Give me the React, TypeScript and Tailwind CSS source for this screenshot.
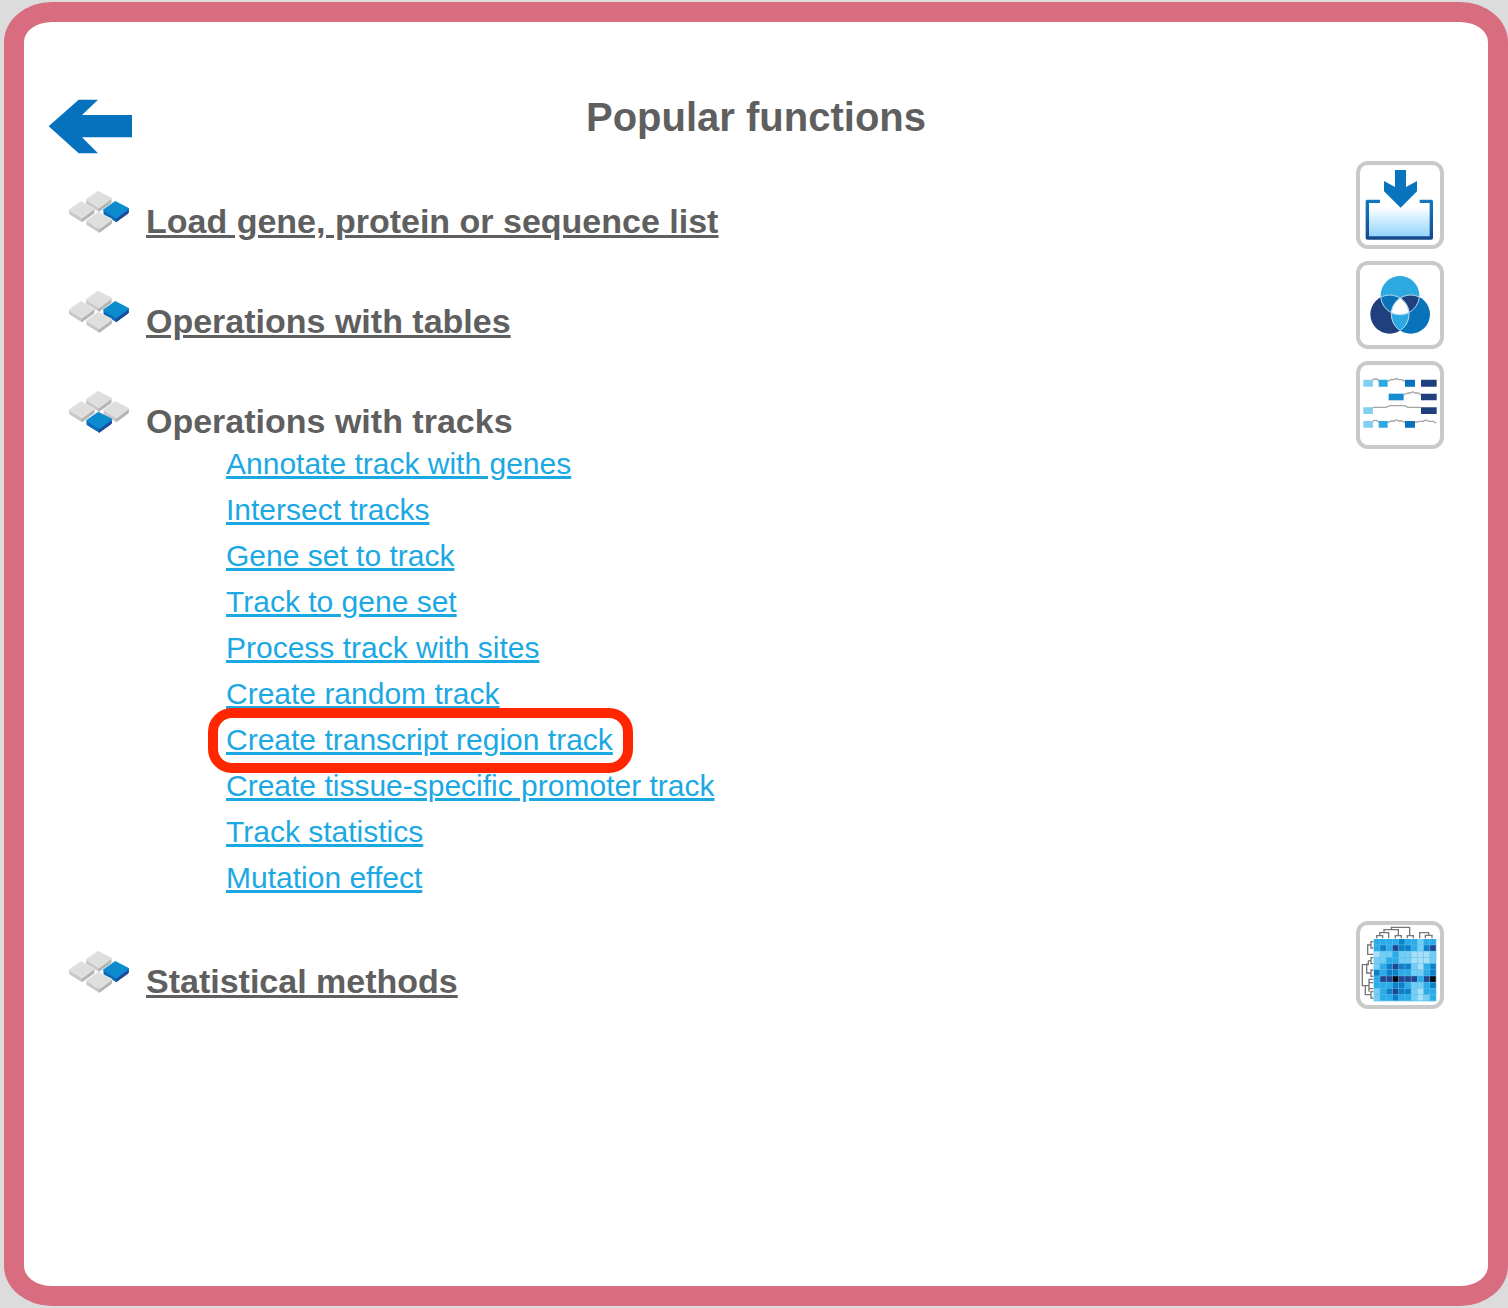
import type { ReactNode } from "react";

const links = [
  "Annotate track with genes",
  "Intersect tracks",
  "Gene set to track",
  "Track to gene set",
  "Process track with sites",
  "Create random track",
  "Create transcript region track",
  "Create tissue-specific promoter track",
  "Track statistics",
  "Mutation effect",
];

function Slab({ x, y, active }: { x: number; y: number; active?: boolean }) {
  return (
    <g transform={`translate(${x} ${y})`} strokeLinejoin="round">
      <path
        d="M2 27 39 50V62L2 39Z"
        fill={active ? "#0b6ab8" : "#c8c8c8"}
        stroke={active ? "#0b6ab8" : "#c8c8c8"}
        strokeWidth="3"
      />
      <path
        d="M39 50 75 24V36L39 62Z"
        fill={active ? "#1a4a9e" : "#b4b4b4"}
        stroke={active ? "#1a4a9e" : "#b4b4b4"}
        strokeWidth="3"
      />
      <path
        d="M36 3 75 23 39 50 2 27Z"
        fill={active ? "#0d8bcf" : "#dededd"}
        stroke={active ? "#0d8bcf" : "#e0e0e0"}
        strokeWidth="5"
      />
    </g>
  );
}

function SlabIcon({ open }: { open?: boolean }) {
  return (
    <svg viewBox="0 0 180 126" className="h-[42px] w-[60px]" aria-hidden="true">
      <Slab x={51} y={-1} />
      <Slab x={0} y={30} />
      <Slab x={103} y={30} active={!open} />
      <Slab x={52} y={62} active={open} />
    </svg>
  );
}

function LoadIcon() {
  return (
    <svg viewBox="30 30 240 240" className="size-20" aria-hidden="true">
      <defs>
        <linearGradient id="tray" x1="0" y1="0" x2="0" y2="1">
          <stop offset="0.15" stopColor="#ffffff" />
          <stop offset="1" stopColor="#8bd3ff" />
        </linearGradient>
        <linearGradient id="trayEdge" x1="0" y1="0" x2="0" y2="1">
          <stop offset="0" stopColor="#1277be" />
          <stop offset="1" stopColor="#174a8c" />
        </linearGradient>
      </defs>
      <path d="M52 139H244V249H52Z" fill="url(#tray)" />
      <path d="M90 139H52V249H244V139H209" fill="none" stroke="url(#trayEdge)" strokeWidth="10" strokeLinejoin="round" />
      <path d="M135 45H168V96L201 78V109L152 158 102 109V78L135 96Z" fill="#0874be" />
    </svg>
  );
}

function VennIcon() {
  return (
    <svg viewBox="30 30 240 240" className="size-20" aria-hidden="true">
      <defs>
        <clipPath id="vTop"><circle cx="150" cy="121" r="58" /></clipPath>
        <clipPath id="vLeft"><circle cx="119" cy="178" r="58" /></clipPath>
        <clipPath id="vRight"><circle cx="182" cy="178" r="58" /></clipPath>
      </defs>
      <circle cx="150" cy="121" r="58" fill="#2ca9e1" />
      <circle cx="119" cy="178" r="58" fill="#1f3f7d" />
      <circle cx="182" cy="178" r="58" fill="#0873bb" />
      <g clipPath="url(#vTop)">
        <circle cx="119" cy="178" r="58" fill="#0873bb" />
        <circle cx="182" cy="178" r="58" fill="#1f3f7d" />
      </g>
      <g clipPath="url(#vLeft)">
        <circle cx="182" cy="178" r="58" fill="#2ca9e1" />
        <g clipPath="url(#vRight)"><circle cx="150" cy="121" r="58" fill="#ffffff" /></g>
      </g>
      <g fill="none" stroke="#b9dcef" strokeWidth="3">
        <g clipPath="url(#vTop)">
          <circle cx="119" cy="178" r="58" />
          <circle cx="182" cy="178" r="58" />
        </g>
        <g clipPath="url(#vLeft)">
          <circle cx="182" cy="178" r="58" />
          <circle cx="150" cy="121" r="58" />
        </g>
        <g clipPath="url(#vRight)">
          <circle cx="119" cy="178" r="58" />
          <circle cx="150" cy="121" r="58" />
        </g>
      </g>
    </svg>
  );
}

function TracksIcon() {
  return (
    <svg viewBox="30 30 240 240" className="size-20" aria-hidden="true">
      <g fill="none" stroke="#a6a6a6" strokeWidth="4">
        <path d="M67 76 73 72H80L87 77M113 79 124 73 133 74 139 70 146 74H155L166 79" />
        <path d="M162 119 175 114H182L188 110 195 114H204L213 120" />
        <path d="M68 157H107L120 152H164L174 157H213" />
        <path d="M67 200 73 196H80L87 201M113 203 124 198H133L139 194 146 198H155L166 203M195 203 207 199H219L227 195 236 199H250L258 205" />
      </g>
      <path d="M40 74H69V95H40ZM40 157H69V177H40ZM40 198H69V218H40Z" fill="#82cff2" />
      <path d="M86 74H113V95H86ZM86 198H113V218H86Z" fill="#2ca9e1" />
      <path d="M116 116H161V136H116Z" fill="#168bcf" />
      <path d="M165 74H195V95H165ZM165 198H195V218H165Z" fill="#0873bb" />
      <path d="M213 74H260V95H213ZM213 116H260V136H213ZM213 157H260V177H213Z" fill="#1f3f7d" />
    </svg>
  );
}

const shades: Record<string, string> = {
  a: "#a9e0f8",
  b: "#74cdf3",
  c: "#2bace6",
  d: "#0f80c8",
  e: "#24458f",
  k: "#05060f",
};

const heat = [
  "ccccdccbcc",
  "cdceddcbde",
  "abbcbbaaab",
  "bbccbbaaab",
  "bcdeddbacd",
  "dcddccbbcd",
  "ceekeeecek",
  "cccddcbbcd",
  "bcdeddbacc",
  "bccdccbabc",
].map((row) => row.split(""));

function HeatmapIcon() {
  return (
    <svg viewBox="30 30 240 240" className="size-20" aria-hidden="true">
      <rect x="71" y="72" width="188" height="187" fill="#5cc0ee" />
      {heat.map((row, r) =>
        row.map((s, c) => (
          <rect
            key={`${r}-${c}`}
            x={72 + c * 18.7}
            y={72 + r * 18.6}
            width="17"
            height="17"
            fill={shades[s]}
          />
        )),
      )}
      <g fill="none" stroke="#777777" strokeWidth="4">
        <path d="M80 70V62H98V70M89 62V53H116V70M102 53V44H145V62M136 70V62H154V70M124 44V37H179V62M172 70V62H190V70" />
        <path d="M209 70V53H236V61M226 70V61H246V70" />
        <path d="M70 80H63V99H70M63 90H53V118H70M70 128H63V146H70M63 137H55M70 165H63V184H70M63 174H50V145M55 137V149H37V212H46M70 193H57V230M70 203H57M57 212H46V239H63M70 221H57M70 230H63V249H70" />
      </g>
    </svg>
  );
}

function Section({
  title,
  icon,
  open,
  children,
}: {
  title: string;
  icon: ReactNode;
  open?: boolean;
  children?: ReactNode;
}) {
  return (
    <section className="grid min-h-[100px] grid-cols-[60px_1fr_88px] items-start gap-x-[17px]">
      <div className="pt-[30px]">
        <SlabIcon open={open} />
      </div>
      <div>
        <h2 className="pt-10 text-[34px] leading-10 font-bold">
          {open ? title : <a href="#" className="underline">{title}</a>}
        </h2>
        {children}
      </div>
      <button
        type="button"
        aria-label={title}
        className="size-[88px] rounded-xl border-4 border-[#c9c9c9] bg-white"
      >
        {icon}
      </button>
    </section>
  );
}

export default function App() {
  return (
    <div className="flex min-h-screen bg-[#dcdcdc] py-0.5 pl-1 font-['Liberation_Sans',Arial,sans-serif] text-[#5f5f5f]">
      <main className="flex-1 rounded-[48px/40px] border-20 border-[#d86d80] bg-white pb-20">
        <header className="grid h-[139px] grid-cols-[1fr_auto_1fr] items-start px-6 pt-[71px]">
          <button type="button" aria-label="Back" className="mt-1.5 w-[84px]">
            <svg viewBox="144 297 252 165" className="h-[55px] w-[84px]" aria-hidden="true">
              <path d="M146 379 236 299H294L246 345H396V412H246L294 460H236Z" fill="#0672be" />
            </svg>
          </button>
          <h1 className="text-[40px] leading-12 font-bold">Popular functions</h1>
        </header>
        <div className="pr-11 pl-[45px]">
          <Section title="Load gene, protein or sequence list" icon={<LoadIcon />} />
          <Section title="Operations with tables" icon={<VennIcon />} />
          <Section title="Operations with tracks" icon={<TracksIcon />} open>
            <ul className="pb-5 pl-20">
              {links.map((label) => (
                <li key={label} className="text-[30px] leading-[46px] text-[#1ba8e3]">
                  <a href="#" className="relative inline-block underline">
                    {label}
                    {label === "Create transcript region track" && (
                      <span className="pointer-events-none absolute -top-[9px] -right-5 -bottom-2.5 -left-[18px] z-10 rounded-3xl border-10 border-[#ff2600]" />
                    )}
                  </a>
                </li>
              ))}
            </ul>
          </Section>
          <Section title="Statistical methods" icon={<HeatmapIcon />} />
        </div>
      </main>
    </div>
  );
}
